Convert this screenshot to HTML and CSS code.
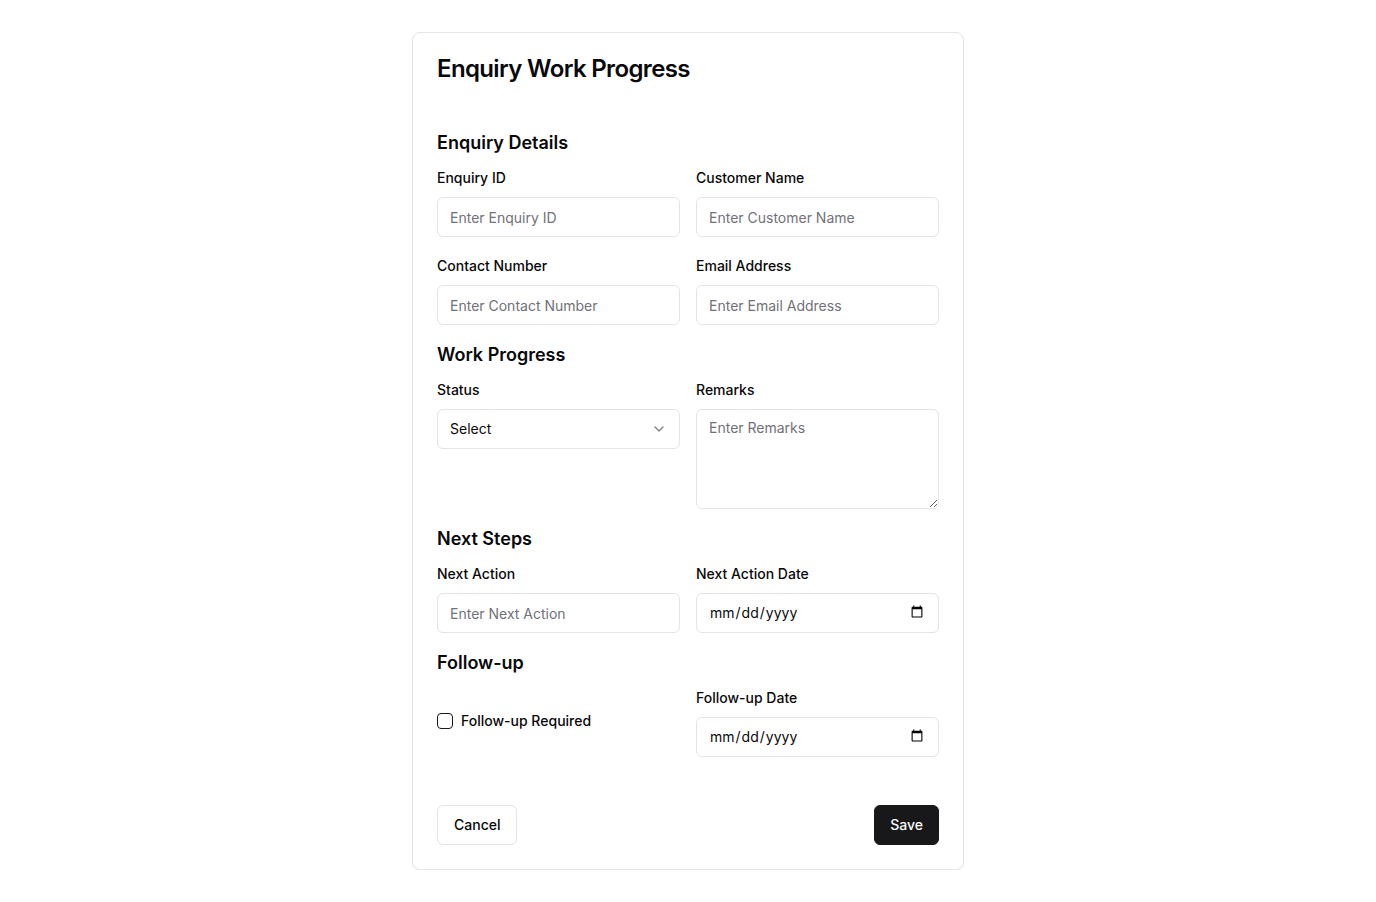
FILE: index.html
```html
<!DOCTYPE html>
<html lang="en">
<head>
<meta charset="utf-8">
<title>Enquiry Work Progress</title>
<link rel="stylesheet" href="styles.css">
</head>
<body>
<div class="card">
  <h1 class="card-title">Enquiry Work Progress</h1>
  <form class="form">
    <div class="sections">
      <section class="section">
        <h2 class="section-title">Enquiry Details</h2>
        <div class="grid">
          <div class="field">
            <label class="label" for="eid">Enquiry ID</label>
            <input class="input" id="eid" type="text" placeholder="Enter Enquiry ID">
          </div>
          <div class="field">
            <label class="label" for="cname">Customer Name</label>
            <input class="input" id="cname" type="text" placeholder="Enter Customer Name">
          </div>
          <div class="field">
            <label class="label" for="cnum">Contact Number</label>
            <input class="input" id="cnum" type="text" placeholder="Enter Contact Number">
          </div>
          <div class="field">
            <label class="label" for="email">Email Address</label>
            <input class="input" id="email" type="text" placeholder="Enter Email Address">
          </div>
        </div>
      </section>
      <section class="section">
        <h2 class="section-title">Work Progress</h2>
        <div class="grid">
          <div class="field">
            <label class="label">Status</label>
            <button type="button" class="input select">
              <span>Select</span>
              <svg class="chev" width="16" height="16" viewBox="0 0 24 24" fill="none" stroke="currentColor" stroke-width="2" stroke-linecap="round" stroke-linejoin="round"><path d="m6 9 6 6 6-6"/></svg>
            </button>
          </div>
          <div class="field">
            <label class="label" for="remarks">Remarks</label>
            <textarea class="input textarea" id="remarks" placeholder="Enter Remarks"></textarea>
          </div>
        </div>
      </section>
      <section class="section">
        <h2 class="section-title">Next Steps</h2>
        <div class="grid">
          <div class="field">
            <label class="label" for="naction">Next Action</label>
            <input class="input" id="naction" type="text" placeholder="Enter Next Action">
          </div>
          <div class="field">
            <label class="label" for="ndate">Next Action Date</label>
            <input class="input date" id="ndate" type="date">
          </div>
        </div>
      </section>
      <section class="section">
        <h2 class="section-title">Follow-up</h2>
        <div class="grid center">
          <div class="check-row">
            <button type="button" class="checkbox" aria-label="Follow-up Required"></button>
            <span class="check-label">Follow-up Required</span>
          </div>
          <div class="field">
            <label class="label" for="fdate">Follow-up Date</label>
            <input class="input date" id="fdate" type="date">
          </div>
        </div>
      </section>
    </div>
    <div class="actions">
      <button type="button" class="btn btn-outline">Cancel</button>
      <button type="button" class="btn btn-primary">Save</button>
    </div>
  </form>
</div>
</body>
</html>
```

FILE: styles.css
```css
* { box-sizing: border-box; }
html, body { margin: 0; padding: 0; background: #ffffff; }
body {
  font-family: Inter, "Noto Sans", "Liberation Sans", sans-serif;
  color: #09090b;
  font-size: 16px;
  line-height: 1.5;
}
.card {
  width: 552px;
  margin: 32px auto 0;
  border: 1px solid #e4e4e7;
  border-radius: 8px;
  background: #fff;
  box-shadow: 0 1px 2px rgba(0,0,0,0.05);
  padding: 24px;
}
.card-title {
  margin: 0;
  font-size: 24px;
  font-weight: 600;
  line-height: 24px;
  letter-spacing: -0.65px;
}
.form { margin-top: 48px; }
.sections { display: flex; flex-direction: column; gap: 16px; }
.section-title {
  margin: 0 0 8px;
  font-size: 18px;
  font-weight: 600;
  line-height: 28px;
}
.grid {
  display: grid;
  grid-template-columns: 1fr 1fr;
  column-gap: 16px;
  row-gap: 16px;
}
.grid.center { align-items: center; }
.field { display: flex; flex-direction: column; gap: 8px; }
.label {
  display: block;
  font-size: 14px;
  font-weight: 500;
  line-height: 26px;
  height: 24px;
}
.input {
  display: flex;
  width: 100%;
  height: 40px;
  border: 1px solid #e4e4e7;
  border-radius: 6px;
  background: #fff;
  padding: 0 12px;
  font-family: inherit;
  font-size: 14px;
  color: #09090b;
  outline: none;
}
.input::placeholder { color: #71717a; }
.select {
  align-items: center;
  justify-content: space-between;
  text-align: left;
  cursor: pointer;
  padding-bottom: 1px;
}
.chev { color: #09090b; opacity: 0.5; margin-top: 1px; }
.textarea {
  height: 100px;
  padding: 8px 12px;
  resize: vertical;
  line-height: 20px;
}
.date {
  display: block;
  color: #09090b;
  padding: 0 12px 2px;
}
.check-row { display: flex; align-items: center; gap: 8px; }
.checkbox {
  width: 16px;
  height: 16px;
  padding: 0;
  border: 1px solid #18181b;
  border-radius: 4px;
  background: #fff;
}
.check-label { font-size: 14px; font-weight: 500; line-height: 20px; }
.actions {
  display: flex;
  justify-content: space-between;
  margin-top: 48px;
}
.btn {
  height: 40px;
  padding: 0 16px 1px;
  border-radius: 6px;
  font-family: inherit;
  font-size: 14px;
  font-weight: 500;
  cursor: pointer;
}
.btn-outline { background: #fff; border: 1px solid #e4e4e7; color: #09090b; }
.btn-primary { background: #18181b; border: 1px solid #18181b; color: #fafafa; padding: 0 15px 1px; }
```
